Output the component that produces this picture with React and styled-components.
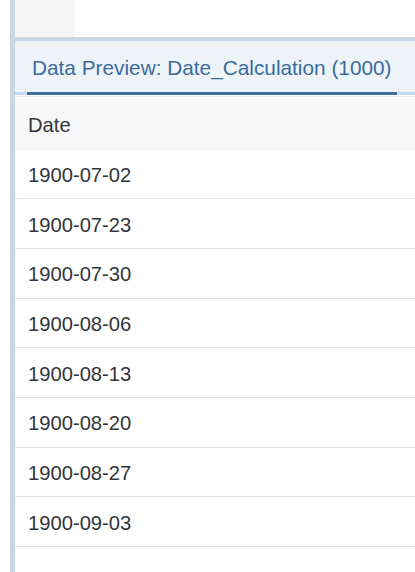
// Data preview panel: tab header with a single table column of dates

import React from "react";
import styled, { createGlobalStyle } from "styled-components";

const dates = [
  "1900-07-02",
  "1900-07-23",
  "1900-07-30",
  "1900-08-06",
  "1900-08-13",
  "1900-08-20",
  "1900-08-27",
  "1900-09-03",
];

const App = () => {
  return (
    <>
      <GlobalStyle />
      <Page>
        <Main>
          <TopStrip>
            <GreyCell />
          </TopStrip>
          <Panel>
            <TabBar>
              <Tab>Data Preview: Date_Calculation (1000)</Tab>
            </TabBar>
            <Table>
              <HeaderRow>Date</HeaderRow>
              {dates.map((d) => (
                <Row key={d}>{d}</Row>
              ))}
            </Table>
          </Panel>
        </Main>
      </Page>
    </>
  );
};

export default App;

// Styles :

const GlobalStyle = createGlobalStyle`
  html, body {
    margin: 0;
    padding: 0;
    background: #ffffff;
    font-family: "Liberation Sans", Arial, sans-serif;
  }
`;

// Page container, white gutter on the left
const Page = styled.div`
  display: flex;
  height: 572px;
  padding-left: 10px;
  overflow: hidden;
`;

const Main = styled.div`
  flex: 1;
  display: flex;
  flex-direction: column;
  border-left: 5px solid #c6d7e7;
`;

// Strip above the panel
const TopStrip = styled.div`
  display: flex;
  height: 37px;
`;

const GreyCell = styled.div`
  width: 60px;
  background: #f5f5f5;
`;

// Panel with tab header
const Panel = styled.div`
  flex: 1;
  border-top: 4px solid #c6d7e7;
`;

const TabBar = styled.div`
  display: flex;
  align-items: flex-end;
  height: 54px;
  padding-left: 12px;
  background: #eef3f8;
  box-shadow: inset 0 -3px 0 #c9dbed;
`;

const Tab = styled.div`
  padding: 3px 5px 0;
  height: 54px;
  box-sizing: border-box;
  display: flex;
  align-items: center;
  border-bottom: 3px solid #3b6c9c;
  color: #3b6c9c;
  font-size: 20.8px;
  white-space: nowrap;
`;

// Table
const Table = styled.div`
  margin-top: 1px;
  border-top: 1px solid #e6e6e6;
  padding-top: 1px;
`;

const Cell = styled.div`
  display: flex;
  align-items: center;
  box-sizing: border-box;
  padding: 3px 0 0 13px;
  color: #32363a;
  font-size: 20.2px;
`;

const HeaderRow = styled(Cell)`
  height: 51.5px;
  background: #f7f7f7;
`;

const Row = styled(Cell)`
  height: 49.7px;
  border-bottom: 1px solid #e5e5e5;
`;
